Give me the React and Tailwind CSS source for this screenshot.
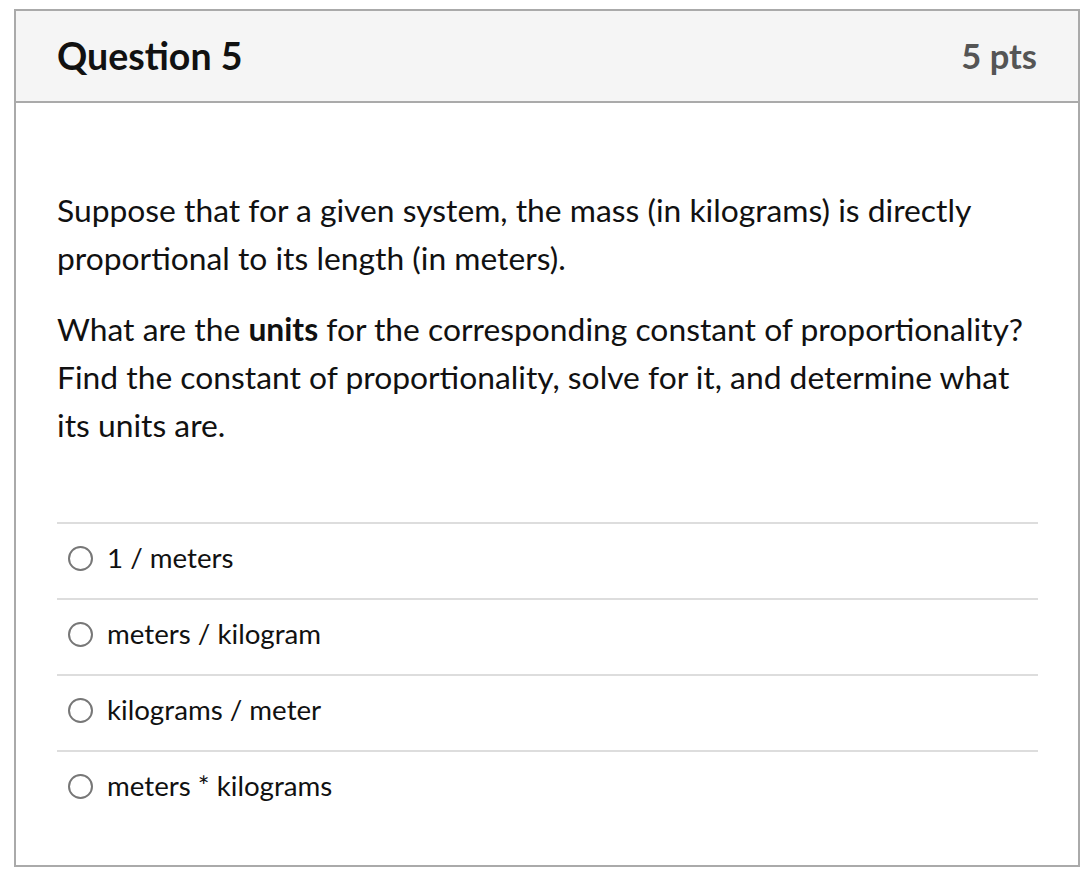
export default function App() {
  const answers = ["1 / meters", "meters / kilogram", "kilograms / meter", "meters * kilograms"];
  return (
    <div className="w-[1082px] h-[878px] bg-white pt-[9px] pl-[14px]" style={{ fontFamily: "Lato, 'Open Sans', sans-serif" }}>
      <div className="w-[1066px] h-[858px] border-2 border-[#aaaaaa] flex flex-col">
        <div className="h-[92px] bg-[#f5f5f5] border-b-2 border-[#aaaaaa] flex items-center justify-between pl-[41px] pr-[41px]">
          <div className="text-[37.5px] font-bold text-[#111] leading-none">Question 5</div>
          <div className="text-[34.5px] font-bold text-[#555] leading-none">5 pts</div>
        </div>
        <div className="pl-[41px] pr-[40px] pt-[83px] text-[31.8px] leading-[48px] text-[#111]">
          <p>Suppose that for a given system, the mass (in kilograms) is directly proportional to its length (in meters).</p>
          <p className="mt-[23px]">What are the <b>units</b> for the corresponding constant of proportionality? Find the constant of proportionality, solve for it, and determine what its units are.</p>
          <div className="mt-[73px]">
            {answers.map((a, i) => (
              <div key={i} className="border-t-2 border-[#dddddd] h-[76px] pb-[6px] flex items-center">
                <span className="ml-[11px] w-[25px] h-[25px] rounded-full border-2 border-[#777] bg-white shrink-0"></span>
                <span className="ml-[14px] text-[27.7px] leading-none text-[#111]">{a}</span>
              </div>
            ))}
          </div>
        </div>
      </div>
    </div>
  );
}
